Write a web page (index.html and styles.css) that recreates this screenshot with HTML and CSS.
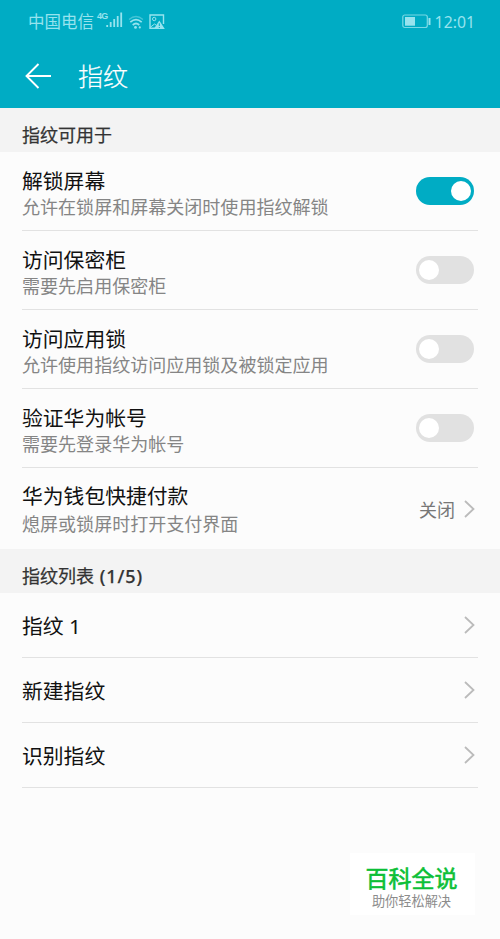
FILE: index.html
```html
<!DOCTYPE html>
<html lang="zh-CN">
<head>
    <meta charset="UTF-8">
    <meta name="viewport" content="width=device-width, initial-scale=1.0">
    <title>指纹</title>
    <link rel="stylesheet" href="styles.css">
</head>
<body>

    <header class="header">
        <div class="status-bar">
            <span class="carrier">中国电信</span>
            <span class="network">4G</span>
            <svg class="signal" width="17" height="16" viewBox="0 0 17 16">
                <path d="M1.2 13v2M4.7 10v5M8.2 7v8M11.7 4v11M15.2 0.500v14.500" fill="none" stroke="currentColor" stroke-width="1.8"/>
            </svg>
            <svg class="wifi" width="16" height="14" viewBox="0 0 16 14">
                <path d="M1 4.500Q8 -1.500 15 4.500" fill="none" stroke="currentColor" stroke-width="1.300" opacity=".45"/>
                <path d="M2.300 7.200Q8 2.200 13.700 7.200M4.700 10Q8 7 11.300 10" fill="none" stroke="currentColor" stroke-width="1.700"/>
                <circle cx="7.500" cy="12.400" r="1.400" fill="currentColor"/>
                <circle cx="11.800" cy="12.400" r="1.100" fill="currentColor"/>
            </svg>
            <svg class="picture" width="16" height="16" viewBox="0 0 16 16">
                <path d="M7 14.300H1V1h13.500v9" fill="none" stroke="currentColor" stroke-width="1.400"/>
                <circle cx="5.200" cy="5" r="1.700" fill="none" stroke="currentColor"/>
                <path d="M1 13.500l4.500-3.500 1.500 1" fill="none" stroke="currentColor"/>
                <path d="M10.300 6.500L15.800 15H4.800z" fill="currentColor"/>
                <path d="M10.300 9.300v2.700M10.300 13v1" stroke="#00acc4"/>
            </svg>
            <svg class="battery" width="29" height="15" viewBox="0 0 29 15">
                <rect x="0.800" y="1" width="24.500" height="12.500" rx="2" fill="none" stroke="currentColor" stroke-width="1.200" opacity=".8"/>
                <rect x="3" y="3" width="10" height="8.700" fill="currentColor"/>
                <path d="M27.500 4v7" stroke="currentColor" stroke-width="2"/>
            </svg>
            <span class="time">12:01</span>
        </div>
        <div class="title-bar">
            <svg class="back" width="27" height="26" viewBox="0 0 27 26">
                <path d="M13.500 1L1.500 13l12 12M1.500 13H26" fill="none" stroke="currentColor" stroke-width="1.900"/>
            </svg>
            <h1>指纹</h1>
        </div>
    </header>

    <main>
        <h2 class="section-title">指纹可用于</h2>
        <ul class="list">
            <li class="row">
                <div class="text">
                    <div class="name">解锁屏幕</div>
                    <div class="desc">允许在锁屏和屏幕关闭时使用指纹解锁</div>
                </div>
                <span class="switch on"></span>
            </li>
            <li class="row">
                <div class="text">
                    <div class="name">访问保密柜</div>
                    <div class="desc">需要先启用保密柜</div>
                </div>
                <span class="switch"></span>
            </li>
            <li class="row">
                <div class="text">
                    <div class="name">访问应用锁</div>
                    <div class="desc">允许使用指纹访问应用锁及被锁定应用</div>
                </div>
                <span class="switch"></span>
            </li>
            <li class="row">
                <div class="text">
                    <div class="name">验证华为帐号</div>
                    <div class="desc">需要先登录华为帐号</div>
                </div>
                <span class="switch"></span>
            </li>
            <li class="row wallet">
                <div class="text">
                    <div class="name">华为钱包快捷付款</div>
                    <div class="desc">熄屏或锁屏时打开支付界面</div>
                </div>
                <span class="value">关闭</span>
                <svg class="arrow" width="11" height="18" viewBox="0 0 11 18"><path d="M1 1l8.500 8L1 17"/></svg>
            </li>
        </ul>

        <h2 class="section-title">指纹列表 <span class="count">(1/5)</span></h2>
        <ul class="list">
            <li class="row single">
                <div class="name">指纹 1</div>
                <svg class="arrow" width="11" height="18" viewBox="0 0 11 18"><path d="M1 1l8.500 8L1 17"/></svg>
            </li>
            <li class="row single">
                <div class="name">新建指纹</div>
                <svg class="arrow" width="11" height="18" viewBox="0 0 11 18"><path d="M1 1l8.500 8L1 17"/></svg>
            </li>
            <li class="row single">
                <div class="name">识别指纹</div>
                <svg class="arrow" width="11" height="18" viewBox="0 0 11 18"><path d="M1 1l8.500 8L1 17"/></svg>
            </li>
        </ul>
    </main>

    <div class="watermark">
        <div class="brand">百科全说</div>
        <div class="slogan">助你轻松解决</div>
    </div>

</body>
</html>
```

FILE: styles.css
```css
* {
    box-sizing: border-box;
}

body {
    font-family: "Noto Sans", "Noto Sans CJK SC", sans-serif;
    position: relative;
    min-height: 939px;
    margin: 0;
    background-color: #fcfcfc;
    color: #111;
}

.header {
    height: 108px;
    background-color: #00acc4;
    color: white;
}

.status-bar {
    display: flex;
    align-items: center;
    height: 43px;
    padding: 0 25px 0 28px;
    font-size: 16.5px;
    line-height: 24px;
    color: #97e3ee;
}

.network {
    align-self: flex-start;
    width: 9px;
    margin: 11px 0 0 3px;
    font-family: "Liberation Sans Narrow", "Liberation Sans", sans-serif;
    font-size: 9px;
    font-weight: bold;
    line-height: 11px;
    letter-spacing: -0.8px;
}

.signal {
    margin-top: -3px;
}

.wifi {
    margin-left: 5px;
}

.picture {
    margin-left: 5px;
}

.battery {
    margin-left: auto;
}

.time {
    margin-left: 4px;
    font-size: 15.8px;
}

.title-bar {
    display: flex;
    align-items: center;
    height: 65px;
    padding-left: 25px;
}

.back {
    margin-right: 26px;
}

h1 {
    margin: 0;
    font-size: 25px;
    font-weight: 300;
    line-height: 36px;
    -webkit-text-stroke: 0.2px white;
}

.section-title {
    height: 44px;
    margin: 0;
    padding: 14px 22px 0;
    background-color: #f3f3f3;
    color: #333;
    font-size: 18px;
    font-weight: normal;
    line-height: 26px;
    -webkit-text-stroke: 0.25px #333;
}

.count {
    margin-left: 1px;
    font-weight: 500;
    letter-spacing: 0.9px;
}

.list {
    margin: 0;
    padding: 0 22px;
    list-style: none;
}

.row {
    display: flex;
    align-items: center;
    height: 79px;
    border-bottom: 1px solid #e2e2e2;
}

.wallet {
    height: 81px;
    border-bottom: none;
}

.single {
    height: 65px;
}

.text {
    flex: 1;
    padding-top: 4px;
}

.wallet .text {
    padding-top: 2px;
}

.name {
    font-size: 20.8px;
    line-height: 28px;
}

.desc {
    color: #858585;
    font-size: 18.05px;
    line-height: 25px;
}

.wallet .desc {
    padding-top: 2px;
}

.single .name {
    flex: 1;
    padding-top: 2px;
}

.switch {
    width: 58px;
    height: 28px;
    margin-right: 4px;
    padding: 4px 3px;
    border-radius: 14px;
    background-color: #e1e1e1;
}

.switch::before {
    content: "";
    display: block;
    width: 20px;
    height: 20px;
    border-radius: 50%;
    background-color: white;
}

.switch.on {
    background-color: #00acc4;
}

.switch.on::before {
    margin-left: auto;
}

.value {
    margin-right: 9px;
    color: #777;
    font-size: 18px;
}

.arrow {
    margin-right: 3px;
    fill: none;
    stroke: #bbb;
    stroke-width: 1.8;
}

.watermark {
    position: absolute;
    left: 350px;
    top: 853px;
    width: 125px;
    height: 62px;
    padding: 10px 2px 0 0;
    background-color: white;
    text-align: center;
}

.brand {
    color: #0cbf37;
    font-size: 23px;
    line-height: 31px;
    -webkit-text-stroke: 0.6px #0cbf37;
}

.slogan {
    color: #8c8c8c;
    font-size: 13.2px;
    line-height: 15px;
}
```
